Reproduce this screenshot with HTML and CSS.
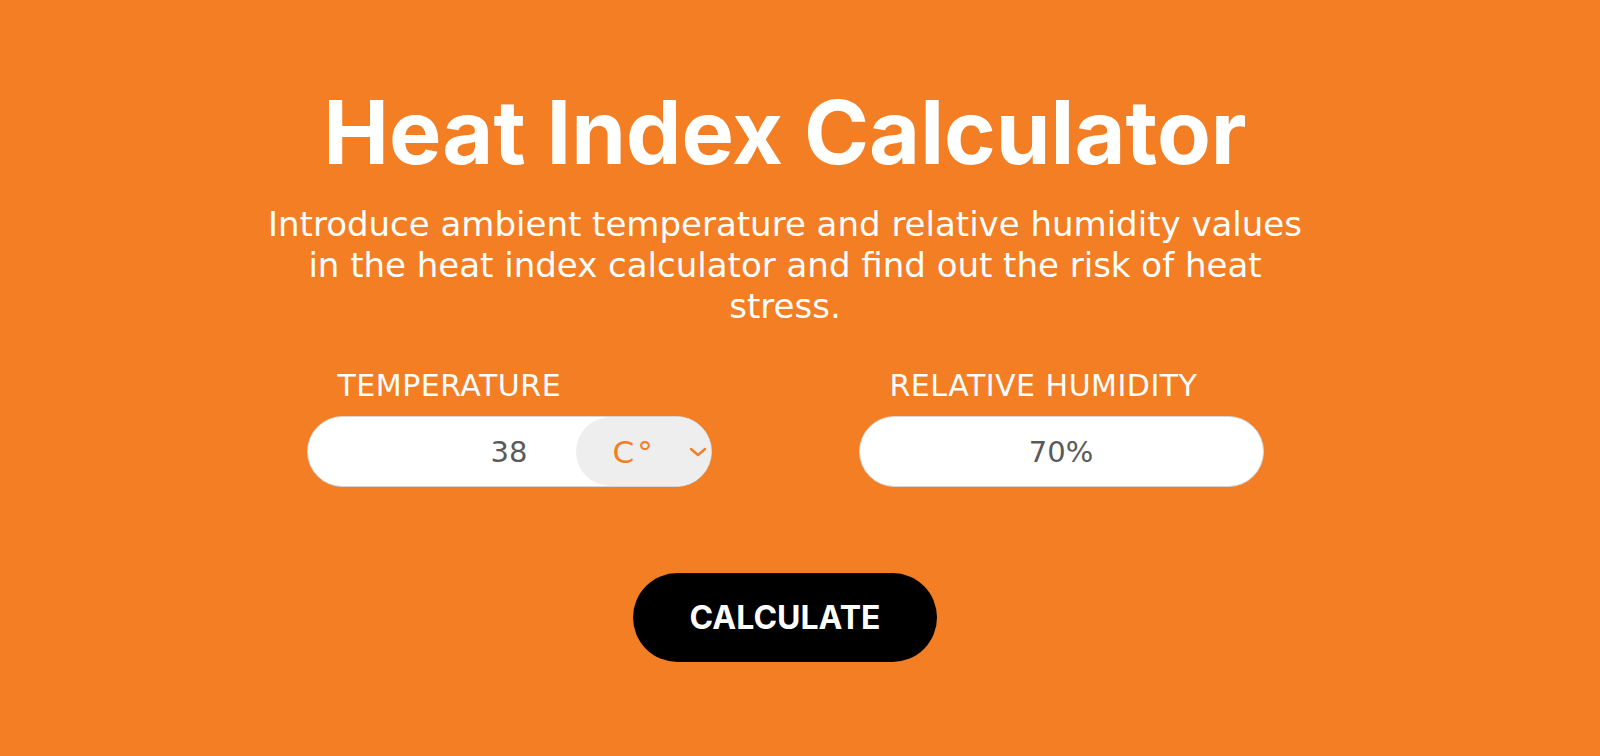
FILE: index.html
```html
<!DOCTYPE html>
<html lang="en">
<head>
    <meta charset="UTF-8">
    <meta name="viewport" content="width=device-width, initial-scale=1.0">
    <title>Heat Index Calculator</title>
    <link rel="stylesheet" href="styles.css">
</head>
<body>
    <div class="container">
        <h1>Heat Index Calculator</h1>
        <p class="intro">Introduce ambient temperature and relative humidity values in the heat index calculator and find out the risk of heat stress.</p>

        <div class="fields">
            <div class="field">
                <label class="field-label">TEMPERATURE</label>
                <div class="field-box">
                    <span class="field-value with-unit">38</span>
                    <div class="unit-select">
                        <span class="unit">C°</span>
                        <svg class="chevron" width="18" height="10" viewBox="0 0 18 10">
                            <path d="M2 2 L9 8 L16 2" fill="none" stroke="#f47e23" stroke-width="2.4" stroke-linecap="round" stroke-linejoin="round"/>
                        </svg>
                    </div>
                </div>
            </div>
            <div class="field">
                <label class="field-label">RELATIVE HUMIDITY</label>
                <div class="field-box">
                    <span class="field-value">70%</span>
                </div>
            </div>
        </div>

        <button class="calc-btn">CALCULATE</button>
    </div>
</body>
</html>
```

FILE: styles.css
```css
body {
    margin: 0;
    background: #f47e23;
    color: #fff;
    font-family: "DejaVu Sans", sans-serif;
}

.container {
    width: 1570px;
    padding-top: 82px;
    display: flex;
    flex-direction: column;
    align-items: center;
}

h1 {
    margin: 0;
    font-family: Inter, sans-serif;
    font-size: 88px;
    font-weight: 700;
    line-height: 100px;
}

.intro {
    width: 1050px;
    margin: 22px 0 0;
    text-align: center;
    font-size: 34px;
    line-height: 41px;
}

.fields {
    display: flex;
    gap: 147px;
    margin-top: 41px;
}

.field {
    display: flex;
    flex-direction: column;
}

.field-label {
    padding-left: 31px;
    font-size: 30px;
    line-height: 36px;
    letter-spacing: 0.5px;
    margin-bottom: 12px;
}

.field-box {
    width: 403px;
    height: 69px;
    display: flex;
    align-items: center;
    background: #fff;
    border: 1px solid #d6d6d6;
    border-radius: 36px;
    overflow: hidden;
}

.field-value {
    flex: 1;
    text-align: center;
    color: #5a5a5a;
    font-size: 29px;
}

.field-value.with-unit {
    text-align: right;
    padding-right: 48px;
}

.unit-select {
    width: 135px;
    height: 100%;
    display: flex;
    align-items: center;
    background: #eeeeee;
    border-radius: 36px;
    box-sizing: border-box;
    padding-left: 37px;
}

.unit {
    color: #f47e23;
    font-size: 31px;
    letter-spacing: 3px;
}

.chevron {
    margin-left: 33px;
}

.calc-btn {
    margin-top: 86px;
    width: 304px;
    height: 89px;
    border: none;
    border-radius: 45px;
    background: #000;
    color: #fff;
    font-family: Inter, sans-serif;
    font-size: 32px;
    font-weight: 700;
    cursor: pointer;
}
```
